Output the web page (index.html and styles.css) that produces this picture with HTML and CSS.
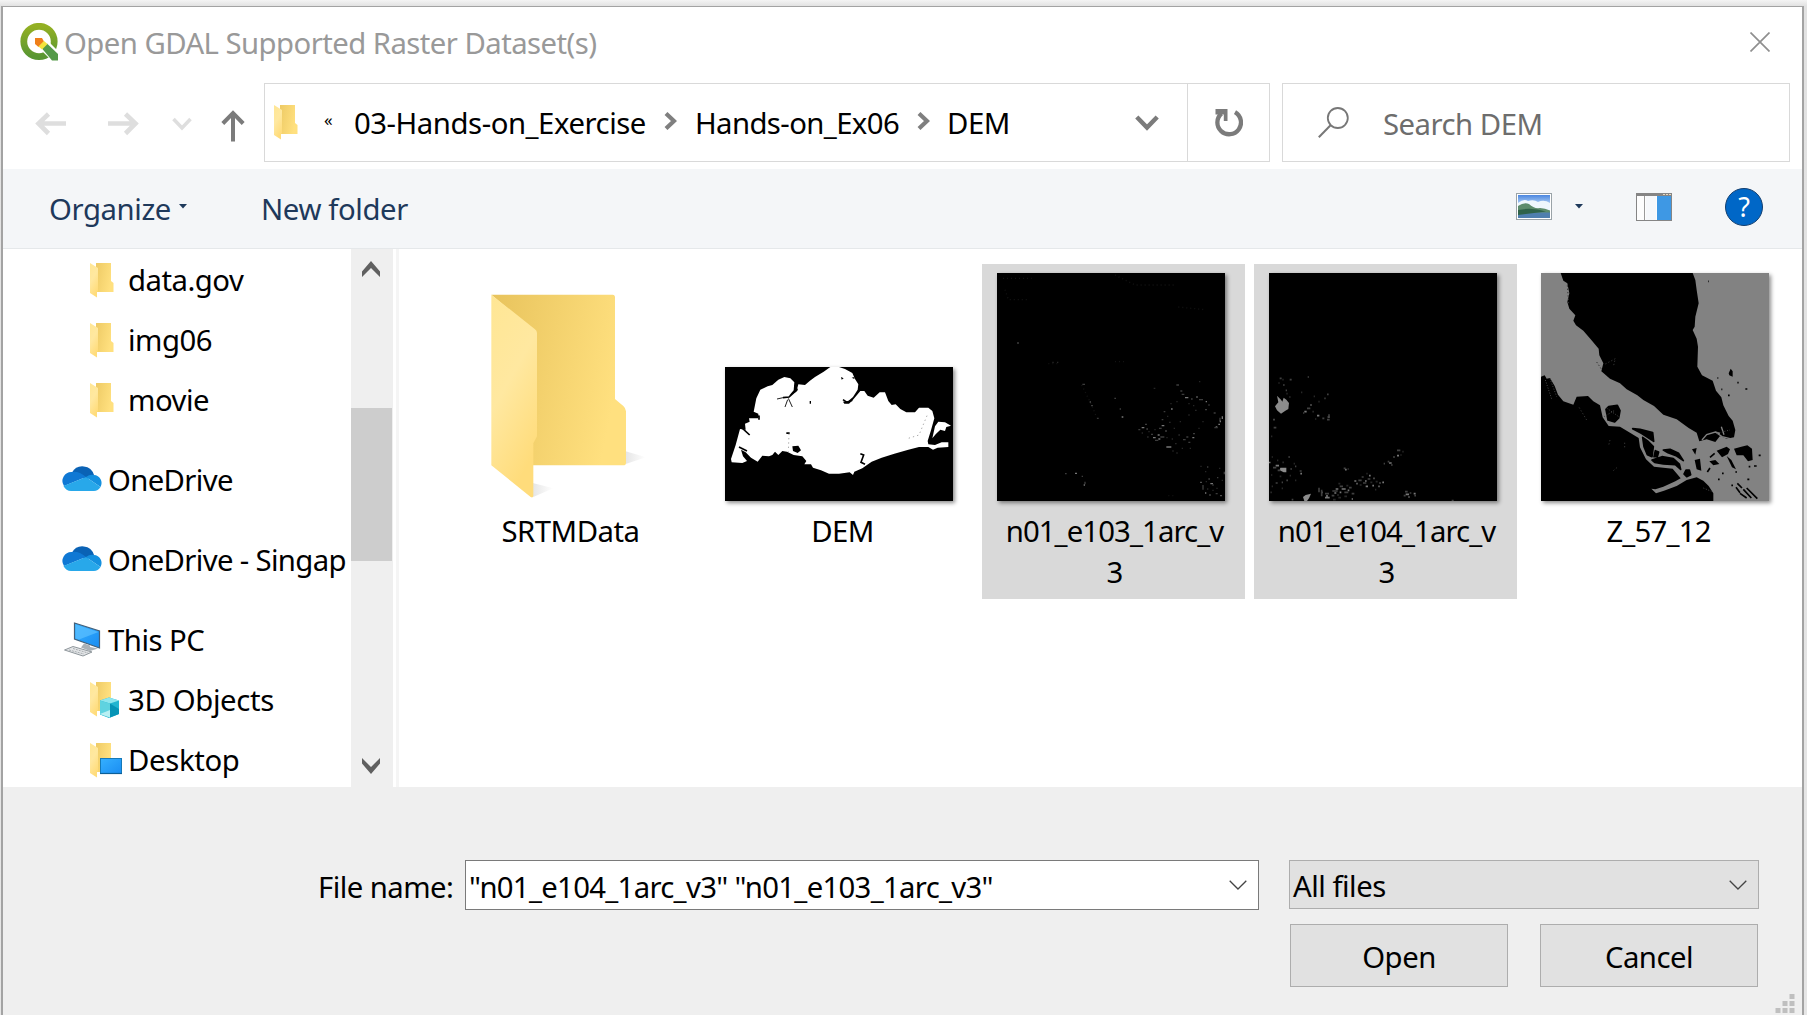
FILE: index.html
```html
<!DOCTYPE html>
<html lang="en">
<head>
<meta charset="utf-8">
<title>Open GDAL Supported Raster Dataset(s)</title>
<link rel="stylesheet" href="styles.css">
</head>
<body>
<svg class="defs" width="0" height="0">
  <defs>
    <linearGradient id="back" x1="0" y1="0" x2="1" y2="0.25"><stop offset="0" stop-color="#e8c35c"/><stop offset="1" stop-color="#ffe07f"/></linearGradient>
    <linearGradient id="flap" x1="0" y1="0" x2="0.4" y2="1"><stop offset="0" stop-color="#ffe694"/><stop offset="0.5" stop-color="#ffe8a0"/><stop offset="1" stop-color="#ffdc7b"/></linearGradient>
    <linearGradient id="shade" x1="0" y1="0" x2="1" y2="0"><stop offset="0" stop-color="#ccc"/><stop offset="1" stop-color="#fff"/></linearGradient>
    <linearGradient id="qring" x1="0" y1="0" x2="0" y2="1"><stop offset="0" stop-color="#93b023"/><stop offset="1" stop-color="#589632"/></linearGradient>
    <linearGradient id="sky" x1="0" y1="0" x2="0" y2="1"><stop offset="0" stop-color="#4a86e0"/><stop offset="0.5" stop-color="#cfe6fa"/><stop offset="1" stop-color="#fff"/></linearGradient>
    <linearGradient id="screen" x1="0" y1="0" x2="1" y2="1"><stop offset="0" stop-color="#35b0ff"/><stop offset="1" stop-color="#1a8df2"/></linearGradient>
    <symbol id="folder" viewBox="0 0 24 35">
      <path d="M0 0H21V18L23.500 20V29H6V0Z" fill="url(#back)"/>
      <path d="M0 0L8 5V28L7 29V34.500L0 30Z" fill="url(#flap)"/>
    </symbol>
    <symbol id="cloud" viewBox="0 0 40 26">
      <path d="M10 7.500A12 12 0 0 1 32 10L24 15Z" fill="#0a62b5"/>
      <path d="M10 7Q17 6 24 12L2 21A9 9 0 0 1 10 7Z" fill="#0f78d4"/>
      <path d="M24 12Q28 9 32 10A8 8 0 0 1 38.500 22Z" fill="#1490df"/>
      <path d="M24 12L38.500 22Q36 26 32 26H9Q4 26 1.500 21Z" fill="#28a8ea"/>
    </symbol>
  </defs>
</svg>
<div class="dialog">
  <header class="titlebar">
    <svg class="logo" width="38" height="38" viewBox="0 0 38 38">
      <ellipse cx="19" cy="18.500" rx="15.200" ry="15.200" fill="none" stroke="url(#qring)" stroke-width="6.800"/>
      <path d="M16 22L24 14L38 28V38H32Z" fill="#fff"/>
      <path d="M31 10L38 12V27Z" fill="none"/>
      <path d="M22 25.500L27 20.500L38 31V37.500H32Z" fill="#549a48"/>
      <path d="M15 15L22 15L24 18.500L18.500 24L15 21Z" fill="#ef7f1a"/>
      <path d="M18.500 23.500L24 18L27.500 21L22 26.500Z" fill="#f3e33c"/>
    </svg>
    <span class="title">Open GDAL Supported Raster Dataset(s)</span>
    <svg class="close" width="20" height="20" viewBox="0 0 20 20"><path d="M0.500 0.500L19.500 19.500M19.500 0.500L0.500 19.500" stroke="#8f8f8f" stroke-width="1.700"/></svg>
  </header>

  <nav class="navbar">
    <div class="arrows">
      <svg width="110" height="34" viewBox="0 0 110 34">
        <g fill="none" stroke="#dedede" stroke-width="4.600">
          <path d="M34 17.500H6M16.500 8L6.500 17.500L16.500 27.500"/>
          <path d="M76 17.500H104M93.500 8L103.500 17.500L93.500 27.500"/>
        </g>
      </svg>
      <svg class="history" width="20" height="14" viewBox="0 0 20 14"><path d="M1.500 2L10 11L18.500 2" fill="none" stroke="#dedede" stroke-width="3.500"/></svg>
      <svg class="up" width="24" height="32" viewBox="0 0 24 32"><path d="M12 31.500V3M1.800 13.500L12 3L22.200 13.500" fill="none" stroke="#7b7b7b" stroke-width="4"/></svg>
    </div>
    <div class="address">
      <div class="path">
        <svg class="path-folder" width="24" height="35"><use href="#folder"/></svg>
        <span class="more">«</span>
        <span class="crumb c1">03-Hands-on_Exercise</span>
        <svg class="sep" width="13" height="18" viewBox="0 0 13 18"><path d="M2 1.500L10 9L2 16.500" fill="none" stroke="#7f7f7f" stroke-width="4.200"/></svg>
        <span class="crumb c2">Hands-on_Ex06</span>
        <svg class="sep" width="13" height="18" viewBox="0 0 13 18"><path d="M2 1.500L10 9L2 16.500" fill="none" stroke="#7f7f7f" stroke-width="4.200"/></svg>
        <span class="crumb c3">DEM</span>
        <svg class="drop" width="24" height="16" viewBox="0 0 24 16"><path d="M1.800 2L12 12.500L22.200 2" fill="none" stroke="#7b7b7b" stroke-width="4.500"/></svg>
      </div>
      <div class="refresh">
        <svg width="28" height="30" viewBox="0 0 28 30"><path d="M20 4.200A11.800 11.800 0 1 1 6.500 5.500" fill="none" stroke="#7b7b7b" stroke-width="4.300"/><path d="M0.500 1H12.500V13H8.800V6.500H0.500Z" fill="#7b7b7b"/></svg>
      </div>
    </div>
    <div class="search">
      <svg width="31" height="31" viewBox="0 0 31 31"><circle cx="19.800" cy="11" r="10" fill="none" stroke="#777" stroke-width="1.800"/><path d="M12.800 18L0.800 30.200" stroke="#777" stroke-width="2"/></svg>
      <span>Search DEM</span>
    </div>
  </nav>

  <div class="commands">
    <span class="organize">Organize</span>
    <svg class="caret" width="8" height="5" viewBox="0 0 8 5"><path d="M0 0H8L4 4.500Z" fill="#1e395b"/></svg>
    <span class="newfolder">New folder</span>
    <svg class="view" width="36" height="27" viewBox="0 0 36 27">
      <rect x="0.500" y="0.500" width="35" height="26" fill="#fff" stroke="#9aa3a8"/>
      <rect x="2" y="2" width="32" height="23" fill="url(#sky)"/>
      <path d="M2 10Q8 5 12 8Q18 6 22 9Q28 6 34 10V17H2Z" fill="#eef7fd"/>
      <path d="M2 18H34V25H2Z" fill="#4f7fae"/>
      <path d="M2 13Q8 9 13 11Q18 16 24 15Q29 15 34 17.500V19.500H2Z" fill="#5c8c6c"/>
      <path d="M2 17Q16 14 30 18.500L2 22Z" fill="#2f6349"/>
    </svg>
    <svg class="caret2" width="8" height="5" viewBox="0 0 8 5"><path d="M0 0H8L4 4.500Z" fill="#1e395b"/></svg>
    <svg class="pane" width="36" height="28" viewBox="0 0 36 28">
      <rect x="0.500" y="0.500" width="35" height="27" fill="#fdfdfd" stroke="#858585"/>
      <path d="M0 0H36V3H0Z" fill="#858585"/><path d="M27 1.500h2m1 0h2m1 0h2" stroke="#e8d9c0"/>
      <path d="M8.500 3V27" stroke="#9a9a9a"/><path d="M10 3H20V27H10Z" fill="#f6f8fb"/>
      <rect x="21" y="3" width="14" height="24" fill="#3e98e4"/>
    </svg>
    <span class="help">?</span>
  </div>

  <main class="body">
    <aside class="tree">
      <div class="row sub"><svg width="24" height="35"><use href="#folder"/></svg><span>data.gov</span></div>
      <div class="row sub"><svg width="24" height="35"><use href="#folder"/></svg><span>img06</span></div>
      <div class="row sub"><svg width="24" height="35"><use href="#folder"/></svg><span>movie</span></div>
      <div class="row top"><svg class="cl" width="40" height="26"><use href="#cloud"/></svg><span class="od">OneDrive</span></div>
      <div class="row top"><svg class="cl" width="40" height="26"><use href="#cloud"/></svg><span class="od">OneDrive - Singap</span></div>
      <div class="row top">
        <svg class="pc" width="40" height="36" viewBox="0 0 40 36">
          <path d="M12.500 1L37.500 9V26L12.500 17Z" fill="url(#screen)" stroke="#43607a" stroke-width="1.200"/>
          <path d="M13.500 2.500L36.500 10L17 17.500L13.500 16.500Z" fill="#5cc1ff" opacity=".7"/>
          <path d="M22 21.500L28 23.500V25L36 26.500L28 29L19 25.500Z" fill="#a9b1b7"/>
          <path d="M2.500 28L11 24.500L30 30L21 34Z" fill="#e3e5e7" stroke="#8f979c"/>
          <path d="M7 28L22 32M11 26.500L26 31" stroke="#a7adb1" stroke-dasharray="2 1"/>
        </svg><span>This PC</span></div>
      <div class="row sub wide"><svg width="33" height="36" viewBox="0 0 33 36">
          <path d="M0 0H21V29H6V0Z" fill="url(#back)"/><path d="M0 0L8 5V28L7 29V34.500L0 30Z" fill="url(#flap)"/>
          <path d="M10 18.500L19 15.500L29 18.500V32L19 36L10 32.500Z" fill="#22b5d0"/><path d="M10 18.500L19 15.500L29 18.500L20 21.500Z" fill="#8ee6ee"/><path d="M10 18.500L20 21.500V35.500L10 32.500Z" fill="#5fd3e0"/><path d="M10 32L20 28V35.500Z" fill="#b9f0f3"/><path d="M20 21.500L29 27V32L20 35.500Z" fill="#0794b6"/>
        </svg><span>3D Objects</span></div>
      <div class="row sub wide"><svg width="33" height="35" viewBox="0 0 33 35">
          <path d="M0 0H21V29H6V0Z" fill="url(#back)"/><path d="M0 0L8 5V28L7 29V34.500L0 30Z" fill="url(#flap)"/>
          <rect x="10.500" y="15.500" width="21" height="15" fill="url(#screen)" stroke="#1579b8"/><path d="M10 30.500H32" stroke="#0c5f97" stroke-width="1.200"/>
        </svg><span>Desktop</span></div>
    </aside>
    <div class="scrollbar">
      <svg class="s-up" width="18" height="16" viewBox="0 0 18 16"><path d="M0 10.500L9 0L18 10.500V16L9 7L0 16Z" fill="#606060"/></svg>
      <div class="thumb"></div>
      <svg class="s-down" width="18" height="16" viewBox="0 0 18 16"><path d="M0 5.500L9 16L18 5.500V0L9 9L0 0Z" fill="#606060"/></svg>
    </div>
    <div class="splitter"></div>
    <section class="files">
      <div class="tile">
        <div class="pic">
          <svg class="bigfolder" viewBox="60 70 470 620" width="156.670" height="206.670">
            <path d="M467 583L528 563L467 545Z" fill="url(#shade)" opacity=".5"/>
            <path d="M188 683L250 656L188 640Z" fill="url(#shade)" opacity=".5"/>
            <path d="M64 75H428Q435 75 435 83V388L460 409Q468 416 468 425V580Q468 587 460 587H188V180Z" fill="url(#back)"/>
            <path d="M64 75L194 178Q201 183 201 190V500L190 521V678Q189 686 182 682L64 587Z" fill="url(#flap)"/>
          </svg>
        </div>
        <span class="label l-srtm">SRTMData</span>
      </div>
      <div class="tile">
        <div class="pic">
          <svg class="shot" viewBox="30 36 684 402" width="228" height="134">
            <rect x="30" y="36" width="684" height="402"/>
            <path fill="#fff" d="M48 312L62 270L75 222L92 224L90 206L104 200L102 190H130V176L116 170L124 130L136 104L158 94L172 90L190 74L208 66L226 70L238 82L236 106L222 122L244 110L250 88L270 90L284 78L300 66L326 50L346 36H372L390 42L412 54L420 72L430 88L428 104L414 126L400 138L384 140L388 146L402 146L414 134L436 108H448L458 122L476 128L494 112H510L520 138L530 150L542 148L556 162L574 172H600L612 158L640 158L652 168L658 190L648 226L638 258L640 268L660 270L680 262H700V276L668 278L654 284L640 276H612L580 284L538 296L500 308L470 320L442 340L418 350L414 360L404 352L372 356H342L318 346L294 338L288 328L268 328L274 318L262 304L236 300L216 290L202 288L190 300L180 290L172 300L162 304L142 302L128 320L108 308L92 292L78 284L84 304L96 318L82 324L50 322Z"/>
            <path fill="#fff" d="M652 250L660 214L670 200L690 202L708 212L694 216L690 228L676 224L662 238Z"/>
            <path fill="none" stroke="#000" stroke-width="5" d="M240 90L246 104L222 126L204 128M80 218L104 240M110 182L132 184L132 194M72 276L96 288M436 296L446 300L438 322L450 328M384 134L396 142L412 136"/>
            <path fill="none" stroke="#222" stroke-width="3" d="M204 128L186 132M220 130L232 156M218 134L210 156"/>
            <path fill="#000" d="M232 274L250 272L258 286L248 294L234 288ZM284 138h4v8h-4ZM214 232h10v5h-10ZM378 66l8 4l-6 4ZM410 68l8-2l0 6Z"/>
            <path fill="none" stroke="#aaa" stroke-width="3" stroke-dasharray="4 9" d="M636 182L612 240L580 250M222 236L220 290"/>
          </svg>
        </div>
        <span class="label l-dem">DEM</span>
      </div>
      <div class="tile selected">
        <div class="pic">
          <svg class="shot" viewBox="66 54 684 684" width="228" height="228">
            <rect x="66" y="54" width="684" height="684"/>
            <g fill="none" stroke-width="4">
              <path stroke="#777" d="M588 462h5M630 428h10M440 486h5M574 576h15M300 655h6M560 512h8M652 548h6M534 548h8M548 540h6M500 518h8M706 686h8M742 484v8M736 496v6M730 508h5M722 516h5M664 426h4M692 440h4M676 682h4M690 714h4M736 722h4M550 552h6M326 690h4"/>
              <path stroke="#3c3c3c" d="M604 390h8M616 408h6M620 418h8M648 432h5M672 434h12M566 470h5M560 494h5M490 524h6M510 508h6M514 522h5M552 520h8M528 538h6M540 556h10M556 546h12M570 528h6M624 554h8M640 562h6M634 546h6M654 536h6M716 474h6M700 450h4M690 464h6M735 488v10M718 518h10M684 690v14M700 672h5M712 690h4M722 716h6M702 720h6M748 650v8M726 668h4M696 636h4M320 664h4M330 680v8M270 656h5M322 388h8M346 438v6M348 452h6M418 430h5M434 462h4M366 490h5M126 264h6"/>
              <path stroke="#262626" d="M232 322h4M246 322h4M604 594h4M672 380h4M536 400h5M582 502h5M596 520h4M614 500h4M640 480h4M660 466h5M604 440h4M610 540h5M590 552h4M600 566h5M620 580h4M644 580h4M670 520h4M682 500h4M576 484h4M586 446h4M640 446h4M654 452h4M500 534h4M516 546h5M520 530h4M538 524h4M574 548h4M592 588h4M676 634h4M690 650h4M732 640h4M740 676h4M696 702h4M712 706h4M692 680h4M724 700h4"/>
              <path stroke="#131313" stroke-dasharray="3 9" d="M84 70H170M90 104L100 134H160M420 60L480 90H600M610 156L690 164M220 326H255M420 320H450M320 390L350 450L366 490M580 722H600"/>
            </g>
          </svg>
        </div>
        <span class="label l-n">n01_e103_1arc_v<br>3</span>
      </div>
      <div class="tile selected">
        <div class="pic">
          <svg class="shot" viewBox="72 54 684 684" width="228" height="228">
            <rect x="72" y="54" width="684" height="684"/>
            <path fill="#8c8c8c" d="M96 422L108 434L112 440L116 428L124 434L132 444L130 462L120 468L108 476L96 466L90 454L100 442ZM106 638H124V652H116L104 646ZM174 726L182 720L198 716L192 730L186 738H178Z"/>
            <g fill="none" stroke-width="5">
              <path stroke="#777" d="M216 482h7M196 450h4M178 470h7M248 486h6M92 632h10M166 656h5M362 694h7M360 678h5M372 662h5M328 678h6M334 686h4M246 720v10M240 728h14M228 712h5M272 702h8M290 702h12M268 714h6M284 712h5M308 706h5M320 732h4M400 694h4M412 682h5M482 718h10M490 726h4M506 716h6M432 624h8M456 602h6M382 692h5M300 644h5M74 620v5"/>
              <path stroke="#404040" d="M104 370h6M134 374h6M122 406h4M188 366h4M114 390h5M246 418h5M238 430h4M186 460h10M174 474h4M232 490h6M252 478v10M246 494h8M84 494h6M86 518h8M130 606h5M150 634h4M84 638h10M98 646h8M136 642h5M164 648h6M124 676h5M92 684h6M110 682h4M296 640h6M308 642h3M416 626h4M428 620h5M444 606h6M456 586h10M438 630h5M340 676h10M354 684h10M368 672h8M384 670h6M350 666h6M262 708h16M284 694h10M298 712h12M312 698h8M222 698v14M230 704v20M240 716h12M260 722h8M320 716h8M402 684h6M480 710h8M494 714h5M508 722h5M476 722h6M620 737h6M140 734h5"/>
              <path stroke="#272727" d="M100 384h4M112 374h4M124 416h4M132 426h5M168 412h4M206 424h4M220 440h4M202 470h5M210 492h4M78 544h4M80 606h4M96 616h4M112 622h5M146 626h4M78 660h4M104 664h5M134 662h4M150 676h4M80 694h4M110 700h4M76 712h5M264 734h8M280 728h8M298 724h8M276 720h6M304 692h6M280 686h6M344 690h6M376 682h6M392 680h6M364 656h4M390 704h4M472 590h4M466 600h4"/>
            </g>
          </svg>
        </div>
        <span class="label l-n">n01_e104_1arc_v<br>3</span>
      </div>
      <div class="tile">
        <div class="pic">
          <svg class="shot" viewBox="33 39 684 684" width="228" height="228">
            <rect x="33" y="39" width="684" height="684" fill="#828282"/>
            <path d="M92 39H488L496 60L500 90L506 130L496 170L494 200L488 210L500 236L504 260L502 320L516 346L548 362L558 392L574 412L580 436L596 468L608 482L616 510L612 532L590 536L570 528L556 546L530 538L508 544L500 518L476 504L440 478L400 464L372 438L340 420L322 406L290 388L270 370L240 356L214 334L220 310L208 286L206 266L184 240L160 212L138 196L130 182L136 166L118 146L112 126L118 100L112 70L100 62Z"/>
            <path d="M33 350L44 346L50 356L60 354L74 378L84 404L100 424L130 434L140 410L174 408L190 424L210 436L218 472L236 498L270 500L300 518L326 534L330 562L348 598L372 620L428 626L452 655L436 664L400 680L376 688L364 686L378 700L402 692L440 678L470 660L500 652L520 662L536 678L550 700V723H33Z"/>
            <path stroke="#000" stroke-width="5" stroke-linejoin="round" d="M228 448L236 440L262 436L270 452L266 474L254 486L234 480ZM308 506L330 508L368 518L371 544L356 534L334 520ZM338 532L352 542L370 560L366 590L352 584L342 560ZM376 572L386 576L382 590L372 590ZM400 570L420 568L446 580L460 602L440 588L414 578ZM366 600L396 590L430 596L448 612L452 628L436 614L400 612L374 607ZM468 630L478 630L482 644L470 650L462 642Z"/>
            <path d="M486 568L500 564L496 584ZM494 600L510 596L514 632L500 628ZM612 566L634 560L652 556L666 566L668 600L654 604L640 586L620 586ZM560 572L590 560L600 568L594 582L576 592ZM590 588L604 600L618 628L606 622ZM538 604L556 600L568 612L550 616ZM596 340L602 326L608 334L608 350L598 346Z"/>
            <path fill="none" stroke="#000" stroke-width="5" d="M622 670L636 684M640 688L664 714M650 684L682 716M630 700L650 714M618 682L630 698M540 624l-8 12M576 640h5M564 658h5M616 636h5M652 658h6M672 618h8M656 620h5M686 586h6M646 387h6M622 368h4M594 406h5M574 388h3M534 64h2M554 580l-14 12M604 676h5M562 354h3"/>
            <path fill="none" stroke="#828282" stroke-width="4" d="M516 540L530 524L556 516L576 530L600 536M582 524L574 500M556 516L570 520"/>
            <path fill="none" stroke="#333" stroke-width="3" stroke-dasharray="4 6" d="M226 312L256 296L250 320M200 306L216 330M170 480L146 440M240 540L236 556M284 548V566M112 76L116 130M250 632L264 620"/>
            <path fill="none" stroke="#484848" stroke-width="3" stroke-dasharray="3 5" d="M46 360L66 420M60 356L80 410M230 444L266 470M222 470L256 450M520 684L544 694M560 520L600 510"/>
          </svg>
        </div>
        <span class="label l-z">Z_57_12</span>
      </div>
    </section>
  </main>

  <footer class="footer">
    <label class="fn-label">File name:</label>
    <div class="fn-field"><span>"n01_e104_1arc_v3" "n01_e103_1arc_v3"</span>
      <svg width="18" height="10" viewBox="0 0 18 10"><path d="M0.700 0.700L9 9L17.300 0.700" fill="none" stroke="#444" stroke-width="1.300"/></svg></div>
    <div class="right">
      <div class="filter"><span>All files</span><svg width="18" height="10" viewBox="0 0 18 10"><path d="M0.700 0.700L9 9L17.300 0.700" fill="none" stroke="#444" stroke-width="1.300"/></svg></div>
      <div class="buttons"><button class="open">Open</button><button class="cancel">Cancel</button></div>
    </div>
    <svg class="grip" width="20" height="20" viewBox="0 0 20 20"><path fill="#bfbfbf" d="M14.500 0h5v5h-5zM7.500 7h5v5h-5zM14.500 7h5v5h-5zM0.500 14h5v5h-5zM7.500 14h5v5h-5zM14.500 14h5v5h-5z"/></svg>
  </footer>
</div>
</body>
</html>
```
FILE: styles.css
```css
* { box-sizing: border-box; }
html, body { height: 100%; }
body {
  margin: 0;
  padding: 6px 3px 0 1px;
  overflow: hidden;
  background: linear-gradient(#f4f4f4, #e2e2e2 6px, #e6e6e6);
  font-family: "Noto Sans", "Open Sans", sans-serif;
  font-size: 29.3px;
  line-height: 40px;
  letter-spacing: -0.5px;
  color: #000;
}
svg { display: block; flex: none; }
.defs { position: absolute; }
span { white-space: nowrap; }
.dialog {
  display: flex;
  flex-direction: column;
  height: 1009px;
  background: #fff;
  border: 1px solid #a3a3a3;
  border-left-width: 2px;
  border-right-width: 2px;
  border-bottom: 0;
}

.titlebar { display: flex; height: 72px; padding-left: 17px; flex: none; }
.logo { margin-top: 16px; }
.title { margin: 16px 0 0 6px; color: #999; letter-spacing: -0.55px; }
.close { margin: 25px 32px 0 auto; }

.navbar { display: flex; height: 90px; padding: 4px 12px 0 0; flex: none; }
.arrows { display: flex; width: 261px; padding: 23px 0 0 29px; }
.history { margin: 11px 0 0 30px; }
.up { margin: 4px 0 0 29px; }
.address { display: flex; width: 1006px; height: 79px; border: 1px solid #d9d9d9; }
.path { display: flex; align-items: center; width: 923px; border-right: 1px solid #d9d9d9; padding-left: 9px; }
.more { width: 20px; margin-left: 26px; font-size: 17px; padding-bottom: 5px; }
.c1 { margin-left: 10px; width: 292px; letter-spacing: -0.45px; }
.c2 { margin-left: 18px; width: 205px; letter-spacing: -0.6px; }
.c3 { margin-left: 17px; width: 62px; }
.sep { margin-left: 18px; margin-bottom: 4px; }
.c2 + .sep { margin-left: 17px; }
.drop { margin: 0 28px 0 auto; }
.refresh { display: flex; flex: 1; align-items: center; justify-content: center; }
.search { display: flex; width: 508px; height: 79px; margin-left: 12px; border: 1px solid #d9d9d9; padding: 20px 0 0 35px; color: #6d6d6d; }
.search svg { margin-top: 3px; }
.search span { margin-left: 34px; }

.commands { display: flex; height: 80px; padding: 0 39px 0 46px; flex: none; align-items: center; background: #f4f6f8; border-bottom: 1px solid #e5e8ea; color: #1e395b; letter-spacing: -0.4px; }
.organize { width: 121px; }
.caret { margin-left: 9px; margin-bottom: 4px; }
.newfolder { margin-left: 74px; }
.view { margin: 0 0 4px auto; }
.caret2 { margin: 0 0 4px 23px; }
.pane { margin: 0 0 4px 53px; }
.help { width: 38px; height: 38px; margin: 0 0 4px 53px; border: 1px solid #123f70; border-radius: 50%; background: #0067c7; color: #fff; font-size: 27px; line-height: 36px; text-align: center; }

.body { display: flex; height: 538px; flex: none; }
.tree { width: 348px; overflow: hidden; padding-top: 1px; }
.row { display: flex; align-items: center; height: 60px; }
.sub { padding-left: 87px; }
.sub span { margin-left: 14px; }
.wide span { margin-left: 5px; letter-spacing: -0.35px; }
.top { margin-top: 20px; padding-left: 59px; }
.top span { margin-left: 6px; }
.top .od { letter-spacing: -0.65px; }
.cl { margin-top: -4px; }
.scrollbar { display: flex; flex-direction: column; align-items: center; width: 42px; background: #efefef; padding-right: 3px; }
.s-up { margin-top: 12px; }
.thumb { align-self: flex-start; width: 41px; height: 153px; margin-top: 131px; background: #cdcdcd; }
.s-down { margin-top: auto; margin-bottom: 13px; }
.splitter { width: 3px; margin-left: 3px; background: #f5f5f5; }
.files { display: flex; gap: 9px; padding: 15px 0 0 39px; }
.tile { display: flex; flex-direction: column; width: 263px; height: 335px; padding-top: 9px; text-align: center; }
.selected { background: #d9d9d9; }
.pic { display: flex; height: 228px; padding-left: 15px; align-items: flex-end; }
.shot { box-shadow: 2px 2px 4px rgba(0, 0, 0, .45); }
.bigfolder { margin: 0 0 1px 37px; }
.label { margin-top: 10px; padding-left: 2px; line-height: 41px; }
.l-n { letter-spacing: -0.9px; }
.l-z { letter-spacing: -0.8px; }

.footer { display: flex; flex: 1; position: relative; padding: 73px 0 0 315px; background: #efefef; }
.fn-label { width: 147px; margin-top: 7px; white-space: nowrap; letter-spacing: -0.55px; }
.fn-field, .filter { display: flex; justify-content: space-between; align-items: center; }
.fn-field { width: 794px; height: 50px; padding: 0 11px 0 3px; background: #fff; border: 1px solid #7a7a7a; }
.fn-field span { padding-top: 4px; letter-spacing: -0.69px; }
.right { margin-left: 30px; width: 470px; }
.filter { height: 49px; padding: 0 11px 0 3px; background: #e1e1e1; border: 1px solid #adadad; }
.filter span { padding-top: 3px; }
.buttons { display: flex; justify-content: space-between; margin: 15px 1px 0; }
button { width: 218px; height: 63px; padding: 3px 0 0; border: 1px solid #adadad; background: #e1e1e1; color: #000; font: inherit; letter-spacing: inherit; }
.grip { position: absolute; right: 7px; bottom: 1px; }
```
